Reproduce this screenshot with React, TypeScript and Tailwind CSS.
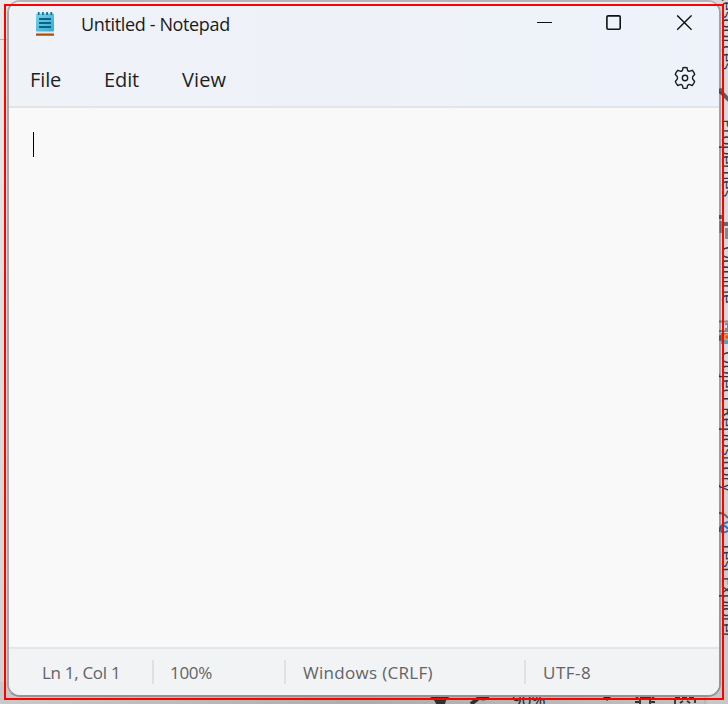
import React from "react";

function NotepadIcon() {
  return (
    <svg width="20" height="26" viewBox="0 0 20 26" className="block">
      <defs>
        <linearGradient id="paper" x1="0" y1="0" x2="1" y2="1">
          <stop offset="0" stopColor="#73d4ee" />
          <stop offset="1" stopColor="#3aa9cb" />
        </linearGradient>
      </defs>
      <rect x="1" y="20.5" width="18" height="2.5" fill="#e8e6e4" />
      <rect x="1" y="22.4" width="18" height="2.4" rx=".6" fill="#a5520d" />
      <rect x="1" y="2.5" width="18" height="18" rx="1" fill="url(#paper)" />
      <path d="M3.7 1v3M7.9 1v3M12.1 1v3M16.3 1v3" stroke="#126e94" strokeWidth="1.7" />
      <path d="M4 8h12M4 12h12M4 16h12" stroke="#0b6388" strokeWidth="1.8" />
    </svg>
  );
}

function GearIcon() {
  return (
    <svg width="24" height="24" viewBox="0 0 24 24" fill="none" stroke="#1b1b1b" strokeWidth="1.4" strokeLinejoin="round">
      <path d="M10 1.7Q12 1.2 14 1.7L14.5 4.1Q15.2 5.6 16.8 5.1L19.2 4.3Q20.9 6 21.7 8.4L20 10.2Q18.9 12 20 13.6L21.7 15.4Q20.9 17.8 19.2 19.5L16.8 18.7Q15.2 18.2 14.5 19.7L14 22.1Q12 22.6 10 22.1L9.5 19.7Q8.8 18.2 7.2 18.7L4.8 19.5Q3.1 17.8 2.3 15.4L4 13.6Q5.1 12 4 10.2L2.3 8.4Q3.1 6 4.8 4.3L7.2 5.1Q8.8 5.6 9.5 4.1Z" />
      <circle cx="12" cy="12" r="2.7" />
    </svg>
  );
}

const sideLabel =
  "absolute left-[718px] whitespace-nowrap text-[17px] leading-[20px] text-[#35353b] [writing-mode:vertical-rl]";

function Backdrop() {
  return (
    <div className="absolute inset-0 overflow-hidden bg-[#c8c8c8]">
      <div className="absolute left-0 top-0 h-[682px] w-5 bg-gradient-to-b from-[#eaeaea] to-[#d2d2d2]" />
      <div className="absolute left-0 top-[39px] h-px w-5 bg-[#b5b5b5]" />
      <div className="absolute bottom-0 left-0 h-[22px] w-full bg-gradient-to-r from-[#c9c9c9] via-[#adadad] to-[#c3c3c3]" />
      <div className="absolute right-0 top-0 h-full w-5 bg-gradient-to-b from-[#d9d9d9] via-[#d9d9d9] to-[#c7c7c7]" />
      <div className={`${sideLabel} top-[-9px] tracking-[-0.3px]`}>Resources</div>
      <div className={`${sideLabel} top-[119px] tracking-[-0.45px]`}>Properties</div>
      <div className={`${sideLabel} top-[246px] tracking-[-0.1px]`}>Outline</div>
      <div className={`${sideLabel} top-[351px]`}>Object Repository</div>
      <div className={`${sideLabel} top-[542px] tracking-[-0.6px]`}>Test Explorer</div>
      <svg className="absolute left-[712px] top-0" width="16" height="704" fill="none">
        <path d="M8 91L18 101" stroke="#5d5d5d" strokeWidth="4" />
        <circle cx="9" cy="91" r="2" stroke="#5d5d5d" strokeWidth="1.5" />
        <path d="M7 217h4M12 224h4" stroke="#666" strokeWidth="4" />
        <path d="M14.5 228v11M9 221v12" stroke="#888" strokeWidth="3" />
        <path d="M7 321.5h9M7 331h9M13 324h3v5h-3" stroke="#888" strokeWidth="2" />
        <path d="M9 338h7v6h-7z" fill="#4ba5c6" />
        <path d="M9 333h7v6h-7z" fill="#d95430" />
        <circle cx="9" cy="338" r="3" fill="#7d6f66" />
        <circle cx="15" cy="337" r="2.5" stroke="#e0a54b" strokeWidth="1.5" />
        <path d="M7 532Q8 524 16 522M16 529q-4-6-6 0t6 2" stroke="#2277bd" strokeWidth="2" />
        <path d="M7 513q5 0 9 5" stroke="#656565" strokeWidth="2" />
      </svg>
      <svg className="absolute left-[425px] top-[693px]" width="303" height="11" fill="none" stroke="#303030">
        <path d="M5 4l4-2h11l5 2q-4 1-5 7h-9Q10 7 5 4z" fill="#303030" stroke="none" />
        <path d="M46 11l9-7M54 3q4 5 9 0" strokeWidth="4" />
        <path d="M177 3h10l-5 5z" fill="#222" stroke="none" />
        <path d="M211 4l4 3M229 4l-4 3M215 5h10v6M215 11V6M210 9h4M226 9h4" strokeWidth="1.8" />
        <path d="M250 11V4h20v7M255 10l3-2M265 10l-3-2" strokeWidth="1.8" strokeDasharray="5 2" />
        <path d="M280 0v11" stroke="#aaa" />
      </svg>
      <div className="absolute left-[512px] top-[688px] text-[17px] leading-[24px] text-[#242424]">90%</div>
    </div>
  );
}

function TitleBar() {
  return (
    <div className="flex h-[45px] items-start">
      <div className="ml-[26px] mt-[9px]"><NotepadIcon /></div>
      <h1 className="ml-[26px] mt-[9px] whitespace-nowrap text-[18px] leading-[26px] tracking-[-0.36px] text-[#1a1a1a]">Untitled - Notepad</h1>
      <div className="ml-auto mr-[27px] mt-[13px] flex items-center gap-[54px]">
        <svg width="16" height="16" stroke="#111" strokeWidth="1"><path d="M1 7.5h15" /></svg>
        <svg width="16" height="16" fill="none" stroke="#111" strokeWidth="1.6"><rect x=".9" y=".9" width="13.3" height="13.3" rx="1.2" /></svg>
        <svg width="16" height="16" stroke="#111" strokeWidth="1.4"><path d="M1.2.4l14.4 14.4M15.6.4L1.2 14.8" /></svg>
      </div>
    </div>
  );
}

export default function App() {
  return (
    <div className="relative h-[704px] w-[728px] overflow-hidden font-['Open_Sans','Noto_Sans',sans-serif]">
      <Backdrop />
      <main className="relative ml-[7px] flex h-[697px] w-[714px] flex-col overflow-hidden rounded-[13px] border-2 border-b-[#929595] border-l-[#a6a9aa] border-r-[#000000]/25 border-t-[#b4b4b4] bg-[#f9f9f9] bg-clip-padding">
        <header className="h-[106px] shrink-0 border-b-2 border-[#e2e5e8] bg-gradient-to-r from-[#eff3f8] via-[#eef2f8] to-[#eef3fb]">
          <TitleBar />
          <nav className="flex h-[59px] items-start text-[20px] leading-[28px] text-[#1f1f1f]">
            <span className="ml-[21px] mt-[19px] w-[74px] tracking-[-0.1px]">File</span>
            <span className="mt-[19px] w-[78px] tracking-[-0.1px]">Edit</span>
            <span className="mt-[19px] tracking-[0.1px]">View</span>
            <div className="ml-auto mr-[22px] mt-[19px]"><GearIcon /></div>
          </nav>
        </header>
        <section className="flex-1 pl-[24px] pt-[24px]">
          <div className="h-[25px] w-px bg-black" />
        </section>
        <footer className="flex h-[48px] shrink-0 items-start border-t-2 border-[#e5e6e7] bg-[#f1f3f5] text-[17px] leading-[24px] tracking-[-0.3px] text-[#626365]">
          <span className="mt-[12px] w-[143px] pl-[33px]">Ln 1, Col 1</span>
          <span className="mt-[11px] h-[24px] w-[132px] border-l-2 border-[#dfe0e1] pl-[16px] pt-px">100%</span>
          <span className="mt-[11px] h-[24px] w-[240px] whitespace-nowrap border-l-2 border-[#dfe0e1] pl-[17px] pt-px tracking-[0.3px]">Windows (CRLF)</span>
          <span className="mt-[11px] h-[24px] border-l-2 border-[#dfe0e1] pl-[17px] pt-px tracking-[0.5px]">UTF-8</span>
        </footer>
      </main>
      <div className="pointer-events-none absolute left-[4px] top-[4px] h-[696px] w-[720px] border-2 border-[#ff0000]" />
    </div>
  );
}
